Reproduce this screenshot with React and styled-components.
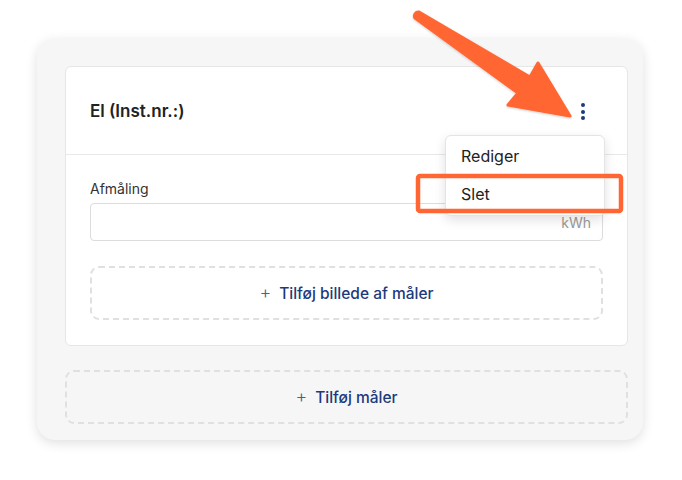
import React from 'react';
import styled, { createGlobalStyle } from 'styled-components';

const GlobalStyle = createGlobalStyle`
  html, body {
    margin: 0;
    padding: 0;
    background: #ffffff;
    font-family: Inter, "Noto Sans", sans-serif;
  }
`;

const Page = styled.div`
  position: relative;
  width: 682px;
  height: 480px;
  padding-top: 39px;
  padding-left: 37px;
  box-sizing: border-box;
`;

const Panel = styled.div`
  width: 606px;
  box-sizing: border-box;
  background: #f6f6f6;
  border-radius: 18px;
  box-shadow: 0 3px 12px rgba(0, 0, 0, 0.13);
  padding: 27px 15px 16px 28px;
  display: flex;
  flex-direction: column;
  gap: 24px;
`;

const Card = styled.div`
  position: relative;
  background: #ffffff;
  border: 1px solid #e6e6e6;
  border-radius: 6px;
`;

const CardHeader = styled.div`
  height: 87px;
  display: flex;
  align-items: center;
  justify-content: space-between;
  padding: 0 36px 0 24px;
  border-bottom: 1px solid #e8e8e8;
`;

const Title = styled.h2`
  margin: 0;
  font-size: 17px;
  font-weight: 600;
  color: #222;
`;

const MenuButton = styled.button`
  width: 16px;
  height: 24px;
  border: 0;
  background: transparent;
  padding: 0;
  display: flex;
  flex-direction: column;
  align-items: center;
  justify-content: center;
  gap: 2.5px;
  margin-top: 2px;
`;

const Dot = styled.span`
  width: 4px;
  height: 4px;
  border-radius: 50%;
  background: #1d3a7d;
`;

const CardBody = styled.div`
  padding: 24px 24px 25px;
  display: flex;
  flex-direction: column;
`;

const Label = styled.label`
  font-size: 14px;
  line-height: 20px;
  color: #333;
  margin-bottom: 4px;
`;

const InputBox = styled.div`
  height: 38px;
  box-sizing: border-box;
  border: 1px solid #dcdcdc;
  border-radius: 4px;
  display: flex;
  align-items: flex-end;
  justify-content: flex-end;
  padding: 0 11px 9px;
`;

const Unit = styled.span`
  font-size: 14px;
  color: #9a9a9a;
`;

const DashedButton = styled.button`
  height: ${p => p.$h}px;
  margin-top: ${p => p.$mt || 0}px;
  width: 100%;
  box-sizing: border-box;
  border: 2px dashed #e0e0e0;
  border-radius: 9px;
  background: transparent;
  display: flex;
  align-items: center;
  justify-content: center;
  gap: 8px;
  font-family: Inter, "Noto Sans", sans-serif;
  font-size: 15.5px;
  font-weight: 500;
  color: #1d3a7d;
`;

const Plus = styled.span`
  font-size: 18px;
  font-weight: 300;
  color: #4b5f8f;
  margin-top: -2px;
`;

const Menu = styled.div`
  position: absolute;
  left: 379px;
  top: 68px;
  width: 158px;
  background: #fff;
  border: 1px solid #e4e4e4;
  border-radius: 6px;
  box-shadow: 0 4px 12px rgba(0, 0, 0, 0.12);
  padding: 1px 0 2px;
  z-index: 2;
`;

const MenuItem = styled.div`
  height: 38px;
  display: flex;
  align-items: center;
  padding-left: 15px;
  font-size: 16px;
  color: #222;
`;

const Annotation = styled.svg`
  position: absolute;
  left: 0;
  top: 0;
  width: 682px;
  height: 480px;
  pointer-events: none;
  z-index: 3;
`;

export default function App() {
  return (
    <>
      <GlobalStyle />
      <Page>
        <Panel>
          <Card>
            <CardHeader>
              <Title>El (Inst.nr.:)</Title>
              <MenuButton aria-label="Menu">
                <Dot />
                <Dot />
                <Dot />
              </MenuButton>
            </CardHeader>
            <CardBody>
              <Label>Afmåling</Label>
              <InputBox>
                <Unit>kWh</Unit>
              </InputBox>
              <DashedButton $h={54} $mt={25}>
                <Plus>+</Plus> Tilføj billede af måler
              </DashedButton>
            </CardBody>
            <Menu>
              <MenuItem>Rediger</MenuItem>
              <MenuItem>Slet</MenuItem>
            </Menu>
          </Card>
          <DashedButton $h={54}>
            <Plus>+</Plus> Tilføj måler
          </DashedButton>
        </Panel>
        <Annotation viewBox="0 0 682 480">
          <defs>
            <filter id="sh" x="-20%" y="-20%" width="140%" height="140%">
              <feDropShadow dx="0" dy="1" stdDeviation="1.2" floodOpacity="0.2" />
            </filter>
          </defs>
          <path
            d="M419,12 L530,77 L538,63 L570,116 L508,105 L518,93 L415,18 A4 4 0 0 1 419,12 Z"
            fill="#ff6633"
            stroke="#ff6633"
            strokeWidth="3"
            strokeLinejoin="round"
            filter="url(#sh)"
          />
          <rect x="418" y="176" width="203" height="35" rx="2" fill="none" stroke="#ff6633" strokeWidth="4.5" />
        </Annotation>
      </Page>
    </>
  );
}
